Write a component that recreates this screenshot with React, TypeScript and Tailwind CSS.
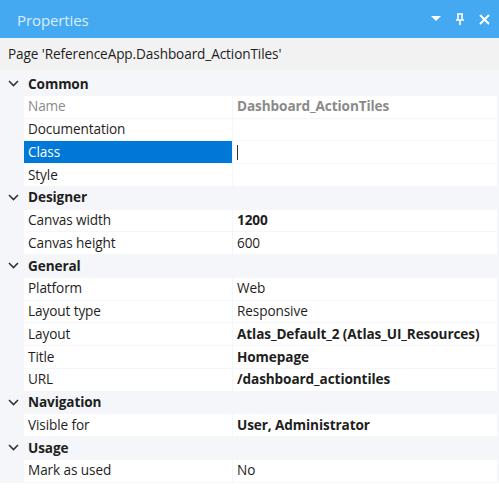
import React from "react";

type Row = { label: string; value?: string; bold?: boolean; muted?: boolean; selected?: boolean };
type Group = { name: string; rows: Row[] };

const groups: Group[] = [
  {
    name: "Common",
    rows: [
      { label: "Name", value: "Dashboard_ActionTiles", bold: true, muted: true },
      { label: "Documentation" },
      { label: "Class", selected: true },
      { label: "Style" },
    ],
  },
  {
    name: "Designer",
    rows: [
      { label: "Canvas width", value: "1200", bold: true },
      { label: "Canvas height", value: "600" },
    ],
  },
  {
    name: "General",
    rows: [
      { label: "Platform", value: "Web" },
      { label: "Layout type", value: "Responsive" },
      { label: "Layout", value: "Atlas_Default_2 (Atlas_UI_Resources)", bold: true },
      { label: "Title", value: "Homepage", bold: true },
      { label: "URL", value: "/dashboard_actiontiles", bold: true },
    ],
  },
  {
    name: "Navigation",
    rows: [{ label: "Visible for", value: "User, Administrator", bold: true }],
  },
  {
    name: "Usage",
    rows: [{ label: "Mark as used", value: "No" }],
  },
];

function Chevron() {
  return (
    <svg width="11" height="7" viewBox="0 0 11 7" className="text-[#333]">
      <path d="M1 1l4.5 4.5L10 1" fill="none" stroke="currentColor" strokeWidth="1.6" />
    </svg>
  );
}

function PropertyRow({ row }: { row: Row }) {
  return (
    <div className="flex h-[22.76px] pb-px pl-[24px] pr-[2px]">
      <div
        className={`flex w-[208px] items-center pl-[4px] ${
          row.selected ? "bg-[#0078d7] text-white" : row.muted ? "bg-white text-[#8a8a8a]" : "bg-white text-[#1e1e1e]"
        }`}
      >
        {row.label}
      </div>
      <div className="ml-px flex flex-1 items-center bg-white pl-[4px]">
        {row.selected ? <span className="h-[15px] w-px bg-[#333]" /> : null}
        {row.value ? (
          <span className={`${row.bold ? "font-bold" : ""} ${row.muted ? "text-[#8a8a8a]" : "text-[#1e1e1e]"}`}>
            {row.value}
          </span>
        ) : null}
      </div>
    </div>
  );
}

export default function App() {
  return (
    <div className="h-[502px] w-[499px] overflow-hidden bg-white text-[13.6px] tracking-[-0.1px] [font-family:'Open_Sans',sans-serif]">
      <div className="flex h-[38px] items-center bg-[#45a9f2] pl-[17px] pr-[9px]">
        <span className="flex-1 pt-[2px] text-[15px] text-[#dcedfc]">Properties</span>
        <div className="flex items-center gap-[14px] text-white">
          <svg width="10" height="6" viewBox="0 0 10 6">
            <path d="M0 0h10L5 5z" fill="currentColor" />
          </svg>
          <svg width="10" height="12" viewBox="0 0 10 12">
            <path d="M2 1h6M3 1v6M7 1v6M1 7h8M5 7v5" fill="none" stroke="currentColor" strokeWidth="1.6" />
          </svg>
          <svg width="11" height="11" viewBox="0 0 11 11">
            <path d="M1 1l9 9M10 1l-9 9" fill="none" stroke="currentColor" strokeWidth="2" />
          </svg>
        </div>
      </div>
      <div className="flex h-[32px] items-center bg-[#f2f2f2] pl-[8px] pt-px text-[#1e1e1e]">
        Page 'ReferenceApp.Dashboard_ActionTiles'
      </div>
      <div className="bg-[#f4f6f9] pt-[3px]">
        {groups.map((group) => (
          <div key={group.name}>
            <div className="flex h-[22.76px] items-center pb-px">
              <span className="flex w-[24px] justify-center pl-[2px]">
                <Chevron />
              </span>
              <span className="pl-[4px] font-bold text-[#1e1e1e]">{group.name}</span>
            </div>
            {group.rows.map((row) => (
              <PropertyRow key={row.label} row={row} />
            ))}
          </div>
        ))}
      </div>
    </div>
  );
}
